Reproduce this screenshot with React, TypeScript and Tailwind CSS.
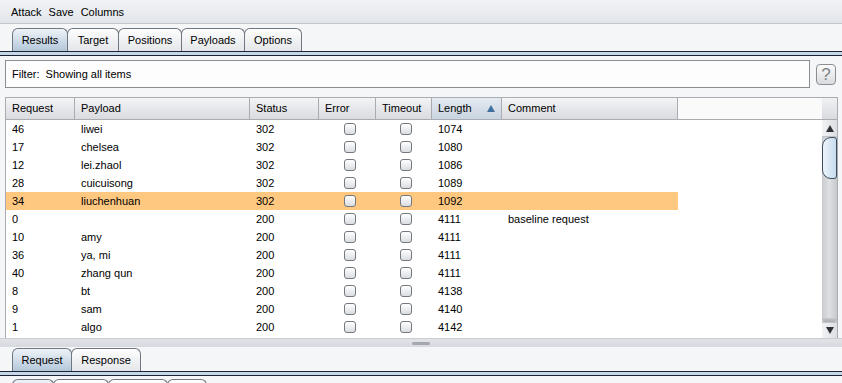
import React from "react";

type Row = {
  req: string;
  payload: string;
  status: string;
  len: string;
  comment?: string;
  hl?: boolean;
};

const rows: Row[] = [
  { req: "46", payload: "liwei", status: "302", len: "1074" },
  { req: "17", payload: "chelsea", status: "302", len: "1080" },
  { req: "12", payload: "lei.zhaol", status: "302", len: "1086" },
  { req: "28", payload: "cuicuisong", status: "302", len: "1089" },
  { req: "34", payload: "liuchenhuan", status: "302", len: "1092", hl: true },
  { req: "0", payload: "", status: "200", len: "4111", comment: "baseline request" },
  { req: "10", payload: "amy", status: "200", len: "4111" },
  { req: "36", payload: "ya, mi", status: "200", len: "4111" },
  { req: "40", payload: "zhang qun", status: "200", len: "4111" },
  { req: "8", payload: "bt", status: "200", len: "4138" },
  { req: "9", payload: "sam", status: "200", len: "4140" },
  { req: "1", payload: "algo", status: "200", len: "4142" },
];

const Tab = ({
  label,
  active,
  w,
}: {
  label: string;
  active?: boolean;
  w: string;
}) => (
  <div
    className={
      "h-[23px] -mr-px flex items-center justify-center border border-b-0 border-[#6f7780] rounded-t-[6px] " +
      w +
      (active
        ? " bg-gradient-to-b from-[#eef3f8] to-[#b3c7da]"
        : " bg-gradient-to-b from-[#fdfdfd] to-[#e4e6e9]")
    }
  >
    {label}
  </div>
);

const DoubleLine = () => (
  <div className="h-[5px] border-t border-b border-[#1b2533] bg-[#c5d7e9] shrink-0" />
);

const Checkbox = () => (
  <div className="w-[12px] h-[12px] rounded-[3px] border border-[#75797e] bg-gradient-to-b from-[#ffffff] to-[#dadde1]" />
);

const Header = ({
  label,
  w,
  sorted,
}: {
  label: string;
  w: string;
  sorted?: boolean;
}) => (
  <div
    className={
      "h-full flex items-center pl-[6px] pr-[6px] border-r border-[#a9acb1] " +
      w +
      (sorted
        ? " bg-gradient-to-b from-[#e4eaf1] to-[#c9d4e0]"
        : " bg-gradient-to-b from-[#f3f4f6] to-[#d9dbdf]")
    }
  >
    <span className="flex-1">{label}</span>
    {sorted && (
      <svg width="8" height="7" viewBox="0 0 8 7">
        <path d="M4 0 L8 7 L0 7 Z" fill="#3d6f9f" />
      </svg>
    )}
  </div>
);

export default function App() {
  return (
    <div className="w-[842px] h-[383px] overflow-hidden bg-[#f5f6f8] text-[11px] text-black font-['Liberation_Sans',Arial,sans-serif] flex flex-col">
      {/* menu */}
      <div className="h-[24px] flex items-center gap-[7px] px-[11px] pt-[1px] bg-gradient-to-b from-[#f1f3f6] to-[#e2e5ea] border-b border-[#c4c8ce] shrink-0">
        <span>Attack</span>
        <span>Save</span>
        <span>Columns</span>
      </div>

      {/* tabs */}
      <div className="pt-[4px] pl-[12px] flex items-end shrink-0">
        <Tab label="Results" active w="w-[56px]" />
        <Tab label="Target" w="w-[52px]" />
        <Tab label="Positions" w="w-[64px]" />
        <Tab label="Payloads" w="w-[64px]" />
        <Tab label="Options" w="w-[58px]" />
      </div>
      <DoubleLine />

      {/* filter */}
      <div className="flex items-center pl-[5px] pr-[6px] pt-[4px] shrink-0">
        <div className="w-[806px] h-[28px] border border-[#8a8d91] bg-[#fdfdfd] flex items-center pl-[6px]">
          Filter:&nbsp; Showing all items
        </div>
        <div className="ml-[6px] w-[20px] h-[21px] rounded-[4px] border border-[#8b8f94] bg-gradient-to-b from-[#fbfbfb] to-[#d9dbde] flex items-center justify-center text-[17px] text-[#7d8186] leading-none">
          ?
        </div>
      </div>

      {/* table */}
      <div className="mt-[9px] ml-[5px] mr-[4px] h-[241px] flex border-l border-t border-[#a9acb1] bg-white shrink-0">
        <div className="flex-1 flex flex-col">
          <div className="h-[22px] flex border-b border-[#a9acb1] shrink-0">
            <Header label="Request" w="w-[69px]" />
            <Header label="Payload" w="w-[175px]" />
            <Header label="Status" w="w-[69px]" />
            <Header label="Error" w="w-[57px]" />
            <Header label="Timeout" w="w-[56px]" />
            <Header label="Length" w="w-[70px]" sorted />
            <Header label="Comment" w="w-[176px]" />
            <div className="flex-1 bg-[#fafafa]" />
          </div>
          <div className="flex-1 overflow-hidden">
            {rows.map((r) => (
              <div
                key={r.req}
                className={
                  "h-[18px] w-[672px] flex items-center " +
                  (r.hl ? "bg-[#ffc880]" : "")
                }
              >
                <div className="w-[69px] pl-[6px]">{r.req}</div>
                <div className="w-[175px] pl-[6px]">{r.payload}</div>
                <div className="w-[69px] pl-[6px]">{r.status}</div>
                <div className="w-[57px] flex justify-center pl-[4px]">
                  <Checkbox />
                </div>
                <div className="w-[56px] flex justify-center pl-[4px]">
                  <Checkbox />
                </div>
                <div className="w-[70px] pl-[6px]">{r.len}</div>
                <div className="w-[176px] pl-[6px]">{r.comment}</div>
              </div>
            ))}
          </div>
        </div>
        {/* scrollbar */}
        <div className="w-[16px] flex flex-col border-r border-[#a9acb1]">
          <div className="h-[22px] bg-gradient-to-b from-[#f0f1f3] to-[#d8dade] border-b border-[#a9acb1] shrink-0" />
          <div className="flex-1 flex flex-col bg-gradient-to-r from-[#c9cbcf] via-[#dedfe2] to-[#c6c8cc]">
            <div className="h-[17px] flex items-center justify-center bg-gradient-to-r from-[#f2f3f5] to-[#dcdee1] border-b border-[#c0c3c7] shrink-0">
              <svg width="8" height="7" viewBox="0 0 8 7">
                <path d="M4 0 L8 7 L0 7 Z" fill="#2f3338" />
              </svg>
            </div>
            <div className="h-[42px] rounded-l-[9px] rounded-r-[3px] border border-[#3d4c5b] bg-gradient-to-r from-[#eef5fb] to-[#c5dbee] shrink-0" />
            <div className="flex-1" />
            <div className="h-[4px] bg-gradient-to-b from-[#c7c9cd] to-[#a9acb0] rounded-b-[4px] shrink-0" />
            <div className="h-[16px] flex items-center justify-center bg-gradient-to-r from-[#f2f3f5] to-[#dcdee1] border-t border-[#c0c3c7] shrink-0">
              <svg width="8" height="7" viewBox="0 0 8 7">
                <path d="M0 0 L8 0 L4 7 Z" fill="#2f3338" />
              </svg>
            </div>
          </div>
        </div>
      </div>

      {/* split divider */}
      <div className="h-[9px] bg-gradient-to-b from-[#e1e3e7] to-[#d6d9dd] flex items-center justify-center shrink-0 border-t border-[#c9ccd0]">
        <div className="w-[18px] h-[3px] rounded-[2px] bg-[#a5a9ae]" />
      </div>

      {/* lower tabs */}
      <div className="pt-[1px] pl-[12px] flex items-end shrink-0">
        <Tab label="Request" active w="w-[60px]" />
        <Tab label="Response" w="w-[70px]" />
      </div>
      <DoubleLine />
      <div className="pt-[3px] pl-[12px] flex items-end shrink-0">
        <Tab label="" active w="w-[42px]" />
        <Tab label="" w="w-[56px]" />
        <Tab label="" w="w-[60px]" />
        <Tab label="" w="w-[40px]" />
      </div>
    </div>
  );
}
